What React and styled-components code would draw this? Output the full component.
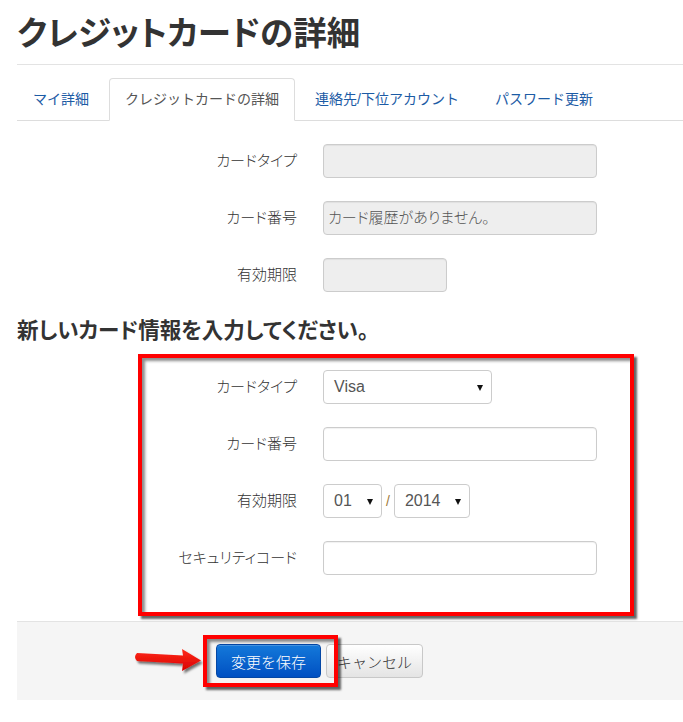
import React from "react";
import styled, { createGlobalStyle } from "styled-components";

const GlobalStyle = createGlobalStyle`
  html, body { margin: 0; padding: 0; background: #fff; }
  body {
    font-family: "Liberation Sans", "Noto Sans CJK JP", sans-serif;
    color: #333;
  }
  * { box-sizing: border-box; }
`;

const Page = styled.div`
  width: 683px;
  height: 722px;
  padding-left: 17px;
  overflow: hidden;
`;

const Header = styled.div`
  padding: 16px 0 13px;
  border-bottom: 1px solid #e3e3e3;
`;

const Title = styled.h1`
  margin: 0;
  font-size: 33.5px;
  line-height: 35px;
  font-weight: 700;
  color: #333;
  font-feature-settings: "palt";
`;

const TabList = styled.ul`
  display: flex;
  margin: 13px 0 0;
  padding: 0;
  list-style: none;
  border-bottom: 1px solid #ddd;
`;

const Tab = styled.li`
  height: 43px;
  line-height: 41px;
  padding: 0 15px;
  margin-right: 4px;
  margin-bottom: -1px;
  font-size: 14px;
  border: 1px solid ${(p) => (p.$active ? "#ddd" : "transparent")};
  border-bottom-color: ${(p) => (p.$active ? "#fff" : "transparent")};
  border-radius: 4px 4px 0 0;
  background: ${(p) => (p.$active ? "#fff" : "transparent")};
  color: ${(p) => (p.$active ? "#555" : "#1c5ba5")};
  white-space: nowrap;
`;

const Fields = styled.div`
  display: flex;
  flex-direction: column;
  gap: 23px;
  padding-top: ${(p) => p.$top}px;
  padding-bottom: ${(p) => p.$bottom || 0}px;
`;

const Row = styled.div`
  display: grid;
  grid-template-columns: 280px auto;
  column-gap: 26px;
  align-items: center;
`;

const Label = styled.label`
  text-align: right;
  font-size: 15px;
  line-height: 20px;
  font-weight: 300;
  color: #333;
  font-feature-settings: "palt";
  white-space: nowrap;
`;

const Input = styled.div`
  width: ${(p) => p.$w}px;
  height: 34px;
  padding: 0 4px;
  border: 1px solid #ccc;
  border-radius: 4px;
  background: ${(p) => (p.$disabled ? "#eee" : "#fff")};
  box-shadow: inset 0 1px 1px rgba(0, 0, 0, 0.06);
  font-size: 15px;
  font-weight: 300;
  line-height: 32px;
  color: #555;
  font-feature-settings: "palt";
  white-space: nowrap;
`;

const Select = styled.div`
  position: relative;
  width: ${(p) => p.$w}px;
  height: 34px;
  padding-left: 10px;
  border: 1px solid #ccc;
  border-radius: 4px;
  background: #fff;
  font-size: 16px;
  line-height: 32px;
  color: #555;
  &::after {
    content: "";
    position: absolute;
    right: 8px;
    top: 14px;
    border-left: 3px solid transparent;
    border-right: 3px solid transparent;
    border-top: 6px solid #111;
  }
`;

const Inline = styled.div`
  display: flex;
  align-items: center;
  gap: 4px;
`;

const Slash = styled.span`
  font-size: 14px;
  color: #a07a3a;
`;

const SubHeading = styled.h3`
  margin: 28px 0 0;
  font-size: 21.5px;
  line-height: 22px;
  font-weight: 700;
  color: #333;
  font-feature-settings: "palt";
`;

const NewSection = styled.div`
  position: relative;
`;

const RedBox = styled.div`
  position: absolute;
  z-index: 2;
  border: 4px solid #ff0000;
  box-shadow: 3px 3px 2px rgba(0, 0, 0, 0.6),
    inset 3px 3px 3px rgba(0, 0, 0, 0.45);
  pointer-events: none;
`;

const FormRedBox = styled(RedBox)`
  top: 12px;
  left: 121px;
  width: 496px;
  bottom: 5px;
`;

const SaveRedBox = styled(RedBox)`
  top: -9px;
  left: -13px;
  right: -17px;
  bottom: -9px;
`;

const Footer = styled.div`
  display: flex;
  align-items: center;
  height: 79px;
  padding-left: 116px;
  border-top: 1px solid #e3e3e3;
  background: #f5f5f5;
`;

const Arrow = styled.svg`
  width: 70px;
  height: 30px;
  margin-right: 13px;
  flex: none;
`;

const Buttons = styled.div`
  display: flex;
  align-items: center;
  gap: 5px;
`;

const SaveWrap = styled.div`
  position: relative;
`;

const Button = styled.button`
  height: 34px;
  padding: 0 ${(p) => (p.$primary ? 14 : 10)}px;
  font-family: inherit;
  font-size: 15px;
  font-weight: 300;
  border-radius: 4px;
  border: 1px solid ${(p) => (p.$primary ? "#0447a5" : "#c8c8c8")};
  color: ${(p) => (p.$primary ? "#fff" : "#333")};
  background: ${(p) =>
    p.$primary
      ? "linear-gradient(#1479da, #0050c2)"
      : "linear-gradient(#ffffff, #e4e4e4)"};
  box-shadow: inset 0 1px 0 rgba(255, 255, 255, 0.2);
  cursor: pointer;
`;

function RedArrow() {
  return (
    <Arrow viewBox="0 0 70 30">
      <defs>
        <filter id="ash" x="-10%" y="-20%" width="130%" height="160%">
          <feDropShadow dx="2" dy="2.5" stdDeviation="1" floodColor="#000" floodOpacity="0.55" />
        </filter>
        <linearGradient id="ag" x1="0" y1="0" x2="0" y2="1">
          <stop offset="0" stopColor="#ff2a1a" />
          <stop offset="1" stopColor="#d80000" />
        </linearGradient>
      </defs>
      <path
        d="M4 7 L50 9.5 L49 3 L68 14.5 L49 25 L50 17.5 L4 15 Q0 11 4 7 Z"
        fill="url(#ag)"
        filter="url(#ash)"
      />
    </Arrow>
  );
}

export default function App() {
  return (
    <>
      <GlobalStyle />
      <Page>
        <Header>
          <Title>クレジットカードの詳細</Title>
        </Header>
        <TabList>
          <Tab>マイ詳細</Tab>
          <Tab $active>クレジットカードの詳細</Tab>
          <Tab>連絡先/下位アカウント</Tab>
          <Tab>パスワード更新</Tab>
        </TabList>

        <Fields $top={23}>
          <Row>
            <Label>カードタイプ</Label>
            <Input $w={274} $disabled />
          </Row>
          <Row>
            <Label>カード番号</Label>
            <Input $w={274} $disabled>カード履歴がありません。</Input>
          </Row>
          <Row>
            <Label>有効期限</Label>
            <Input $w={124} $disabled />
          </Row>
        </Fields>

        <SubHeading>新しいカード情報を入力してください。</SubHeading>

        <NewSection>
          <Fields $top={28} $bottom={46}>
            <Row>
              <Label>カードタイプ</Label>
              <Select $w={169}>Visa</Select>
            </Row>
            <Row>
              <Label>カード番号</Label>
              <Input $w={274} />
            </Row>
            <Row>
              <Label>有効期限</Label>
              <Inline>
                <Select $w={59}>01</Select>
                <Slash>/</Slash>
                <Select $w={76}>2014</Select>
              </Inline>
            </Row>
            <Row>
              <Label>セキュリティコード</Label>
              <Input $w={274} />
            </Row>
          </Fields>
          <FormRedBox />
        </NewSection>

        <Footer>
          <RedArrow />
          <Buttons>
            <SaveWrap>
              <Button $primary>変更を保存</Button>
              <SaveRedBox />
            </SaveWrap>
            <Button>キャンセル</Button>
          </Buttons>
        </Footer>
      </Page>
    </>
  );
}
